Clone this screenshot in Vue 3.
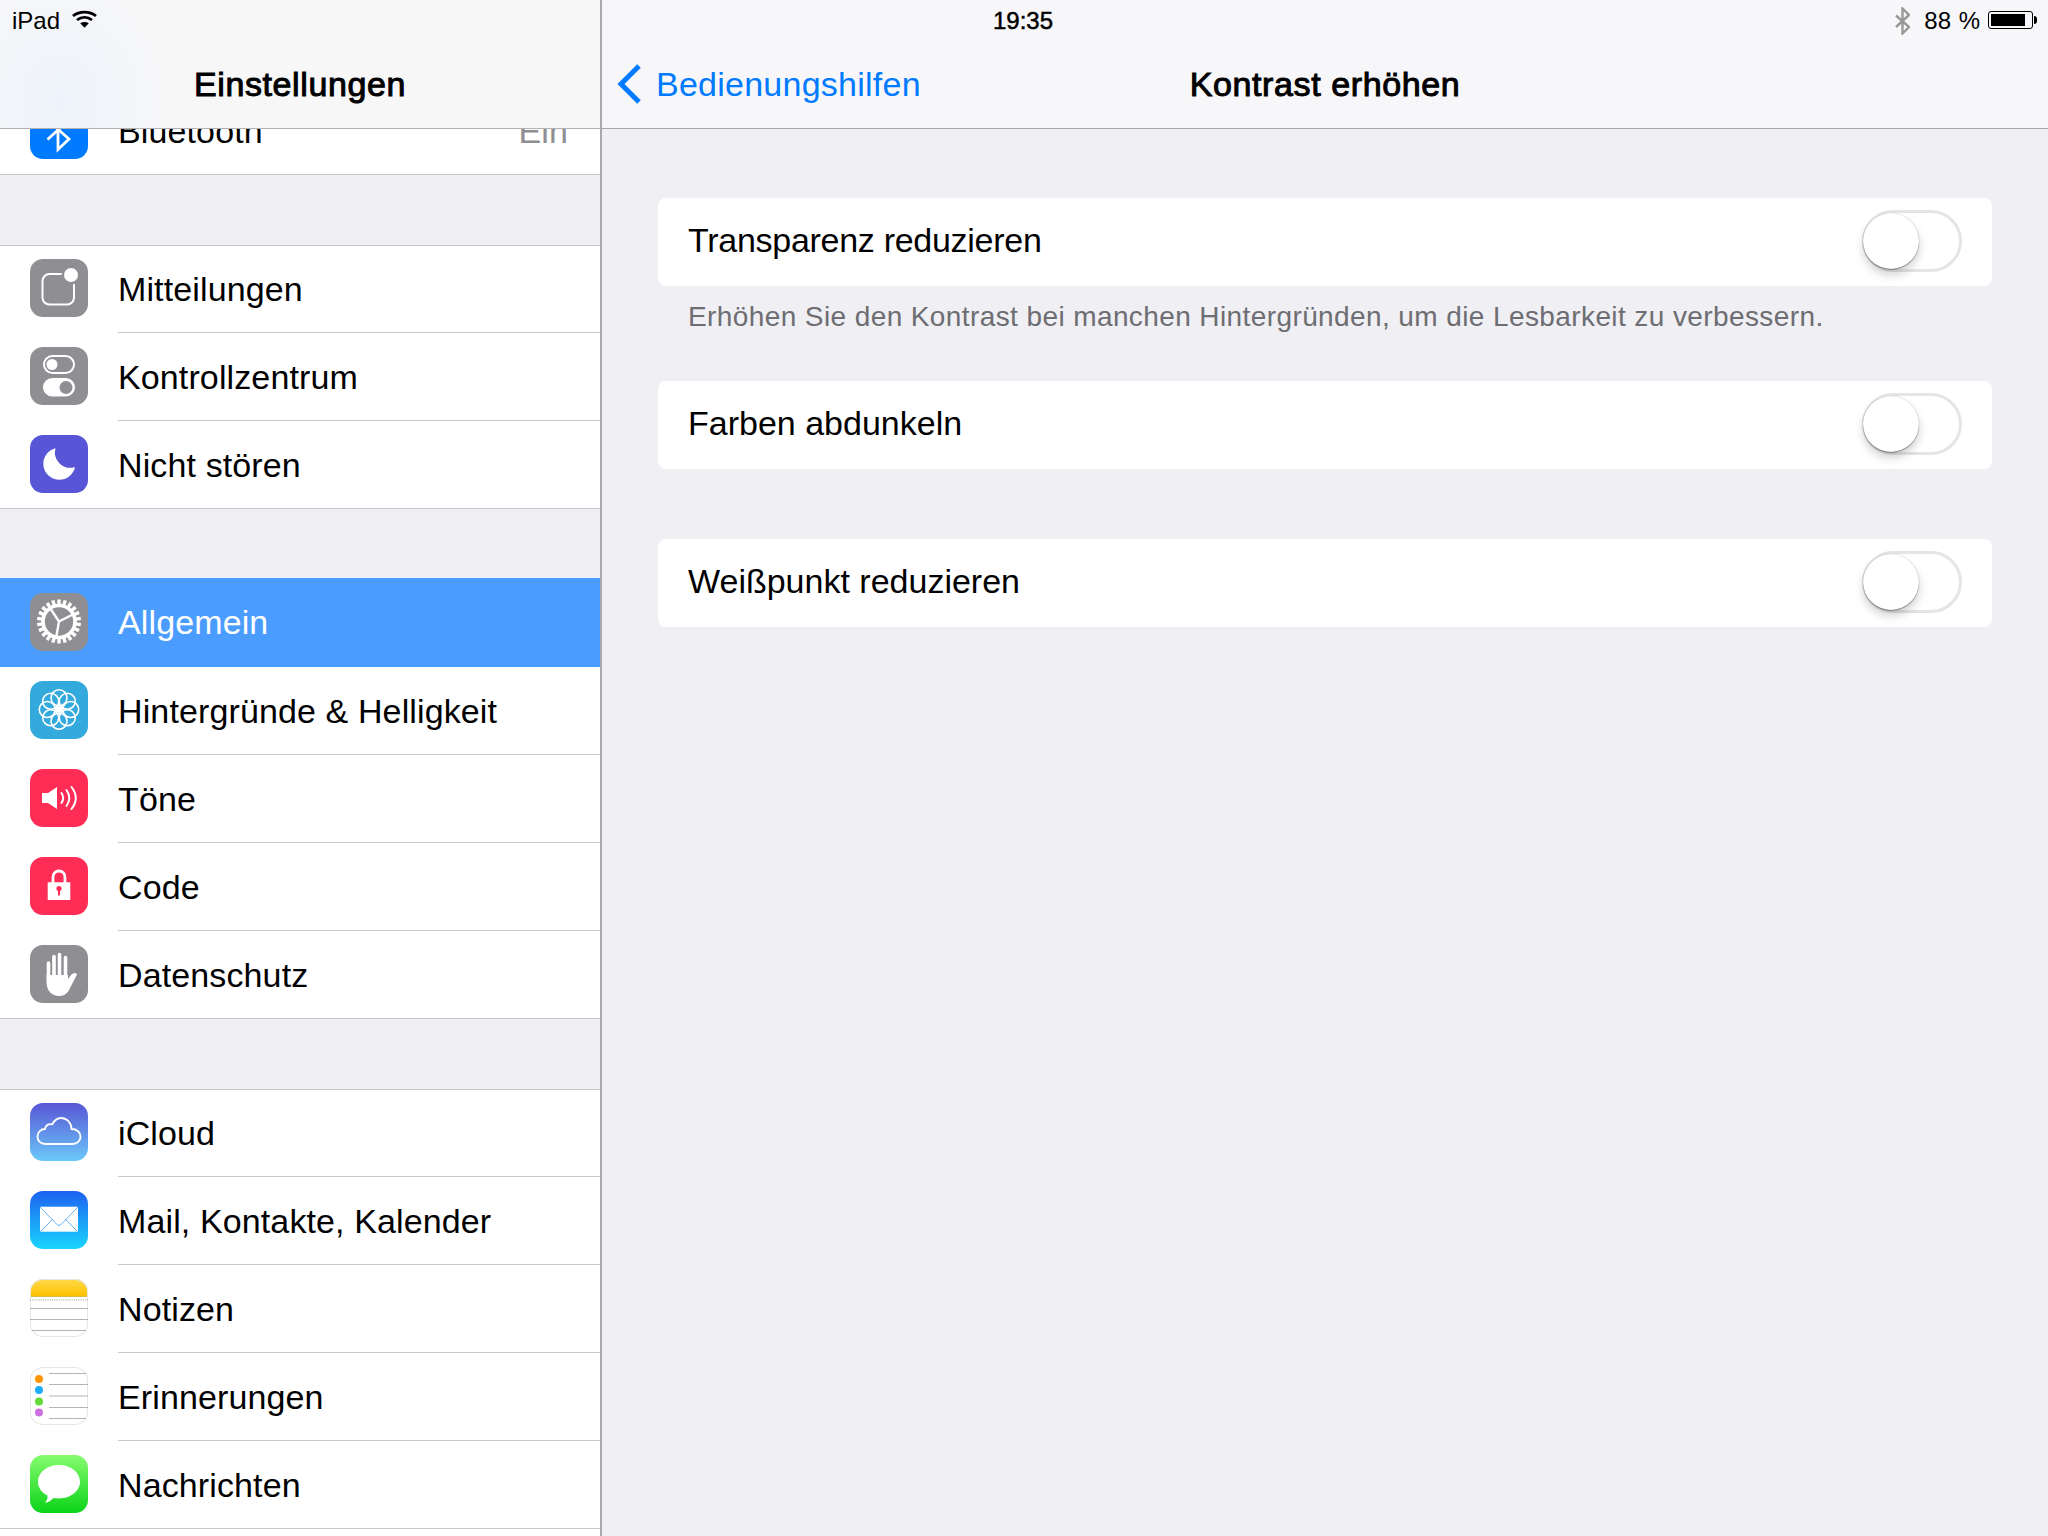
<script setup>
const groups = [
  [{ key: 'bluetooth', label: 'Bluetooth', value: 'Ein', cls: 'ic-blue' }],
  [
    { key: 'notify', label: 'Mitteilungen', cls: 'ic-gray' },
    { key: 'control', label: 'Kontrollzentrum', cls: 'ic-gray' },
    { key: 'moon', label: 'Nicht stören', cls: 'ic-indigo' }
  ],
  [
    { key: 'gear', label: 'Allgemein', cls: 'ic-gray', active: true },
    { key: 'flower', label: 'Hintergründe & Helligkeit', cls: 'ic-teal' },
    { key: 'sound', label: 'Töne', cls: 'ic-red' },
    { key: 'lock', label: 'Code', cls: 'ic-red' },
    { key: 'hand', label: 'Datenschutz', cls: 'ic-gray' }
  ],
  [
    { key: 'cloud', label: 'iCloud', cls: 'ic-cloud' },
    { key: 'mail', label: 'Mail, Kontakte, Kalender', cls: 'ic-mail' },
    { key: 'notes', label: 'Notizen', cls: 'ic-notes' },
    { key: 'reminders', label: 'Erinnerungen', cls: 'ic-white' },
    { key: 'messages', label: 'Nachrichten', cls: 'ic-green' }
  ]
]

const gearTeeth = Array.from({ length: 22 }, (_, i) => (i * 360) / 22)
const petals = Array.from({ length: 8 }, (_, i) => i * 45)
const reminderDots = [
  { y: 12, color: '#ff9500' },
  { y: 23, color: '#1badf8' },
  { y: 34.5, color: '#63da38' },
  { y: 45.5, color: '#cc73e1' }
]
</script>

<template>
  <div class="ipad">
    <aside class="sidebar">
      <header class="side-head">
        <div class="status">
          <span>iPad</span>
          <svg class="wifi" width="25" height="18" viewBox="0 0 25 18">
            <path d="M1 6C7.5 0.8 17.5 0.8 24 6" fill="none" stroke="#000" stroke-width="2.8" />
            <path d="M5 10C9.5 6.6 15.5 6.6 20 10" fill="none" stroke="#000" stroke-width="2.8" />
            <path d="M8.2 13.2C10.8 11.6 14.2 11.6 16.8 13.2L12.5 17.8Z" fill="#000" />
          </svg>
        </div>
        <h1 class="side-title">Einstellungen</h1>
      </header>

      <div class="side-list">
        <section v-for="(group, g) in groups" :key="g" class="group">
          <div v-for="row in group" :key="row.key" class="row" :class="{ active: row.active }">
            <div class="icon" :class="row.cls">
              <svg width="58" height="58" viewBox="0 0 58 58" fill="none">
                <template v-if="row.key === 'bluetooth'">
                  <path d="M17.5 19L39 38L28 48.5V8L39 19L17.5 38.5" stroke="#fff" stroke-width="2.8" />
                </template>
                <template v-else-if="row.key === 'notify'">
                  <rect x="12.5" y="15" width="31.5" height="30.5" rx="7" stroke="#fff" stroke-width="2" />
                  <circle cx="41" cy="16" r="9.5" fill="#8e8e93" />
                  <circle cx="41" cy="16" r="7" fill="#fff" />
                </template>
                <template v-else-if="row.key === 'control'">
                  <rect x="14" y="9" width="30" height="17" rx="8.5" stroke="#fff" stroke-width="2" />
                  <circle cx="22" cy="17.5" r="5.5" fill="#fff" />
                  <rect x="13" y="31" width="32" height="18.5" rx="9.25" fill="#fff" />
                  <circle cx="36" cy="40.5" r="6.5" fill="#8e8e93" />
                </template>
                <template v-else-if="row.key === 'moon'">
                  <path d="M25.5 13.2A16 16 0 1 0 45 32A15.4 15.4 0 0 1 25.5 13.2Z" fill="#fff" />
                </template>
                <template v-else-if="row.key === 'gear'">
                  <circle cx="29" cy="28.5" r="16" stroke="#fff" stroke-width="3.6" />
                  <rect v-for="a in gearTeeth" :key="a" x="27.3" y="6.5" width="3.4" height="7" fill="#fff" :transform="`rotate(${a} 29 28.5)`" />
                  <path d="M29 28.5L20.1 15.2M29 28.5L43.3 21.2M29 28.5L26.2 44.3" stroke="#fff" stroke-width="2.4" />
                </template>
                <template v-else-if="row.key === 'flower'">
                  <circle v-for="a in petals" :key="a" cx="29" cy="16.8" r="8" stroke="#fff" stroke-width="1.6" :transform="`rotate(${a} 29 28.5)`" />
                  <circle cx="29" cy="28.5" r="3.2" fill="#fff" />
                </template>
                <template v-else-if="row.key === 'sound'">
                  <path d="M12 24H18L27 18V40L18 34H12Z" fill="#fff" />
                  <path d="M31.5 24C33.5 27 33.5 31 31.5 34M36.5 21C40 26 40 32 36.5 37M41.5 18C47 25 47 33 41.5 40" stroke="#fff" stroke-width="2" stroke-linecap="round" />
                </template>
                <template v-else-if="row.key === 'lock'">
                  <path d="M23 26V20.5C23 16.5 25.5 14 29 14S35 16.5 35 20.5V26" stroke="#fff" stroke-width="2.8" />
                  <rect x="17.7" y="25.3" width="22.6" height="17.7" fill="#fff" />
                  <circle cx="29" cy="31.5" r="2.6" fill="#ff2d55" />
                  <rect x="28" y="32" width="2" height="6.5" fill="#ff2d55" />
                </template>
                <template v-else-if="row.key === 'hand'">
                  <path d="M16.5 30V38C17 46 22 51 29 51C35 51 38 47.5 40 43L47 29.5C46 27.5 43.5 27.5 41.5 29.5L38 34V30H16.5Z" fill="#fff" />
                  <path d="M18.5 32V18M24 32V11.5M29.5 32V9.5M35.5 33V12.5" stroke="#fff" stroke-width="3.6" stroke-linecap="round" />
                </template>
                <template v-else-if="row.key === 'cloud'">
                  <path d="M15 41C10 41 7.5 37 7.5 33.5C7.5 29 11 26 15 26C15.5 22 19 20.5 22 21.5C24.5 17 28 15 31 15C37 15 41.5 20 41.5 26C47 26 50.5 29.5 50.5 33.5C50.5 38 47 41 43 41Z" stroke="#fff" stroke-width="1.8" />
                </template>
                <template v-else-if="row.key === 'mail'">
                  <rect x="10" y="15.7" width="38" height="25" fill="#fff" />
                  <path d="M10 16L27 33.5Q29 35.5 31 33.5L48 16M10.5 40.5L22.5 28.5M47.5 40.5L35.5 28.5" stroke="#3d9bf3" stroke-width="0.8" />
                </template>
                <template v-else-if="row.key === 'notes'">
                  <path d="M0 21H58" stroke="#999" stroke-width="1" stroke-dasharray="1 1.2" />
                  <path d="M0 29.5H58M0 40.5H58M0 51.5H58" stroke="#b4b4b4" stroke-width="1" />
                </template>
                <template v-else-if="row.key === 'reminders'">
                  <path d="M19 6.5H58M19 17.5H58M19 29H58M19 40.5H58M19 51.5H58" stroke="#b4b4b4" stroke-width="1" />
                  <circle v-for="d in reminderDots" :key="d.y" cx="9" :cy="d.y" r="4" :fill="d.color" />
                </template>
                <template v-else-if="row.key === 'messages'">
                  <path d="M29 10C40.5 10 50 17.5 50 26.7C50 36 40.5 43.4 29 43.4C27 43.4 25.5 43.2 23.5 43C21 45.5 18.5 47.4 15 47.7C17 45.5 17.7 43.5 17.5 40.5C11.5 37.5 8 32.5 8 26.7C8 17.5 17.5 10 29 10Z" fill="#fff" />
                </template>
              </svg>
            </div>
            <div class="row-body">
              <span class="row-label">{{ row.label }}</span>
              <span v-if="row.value" class="row-value">{{ row.value }}</span>
            </div>
          </div>
        </section>
        <div class="row-tail"></div>
      </div>
    </aside>

    <main class="detail">
      <header class="detail-head">
        <div class="status status-detail">
          <span class="clock">19:35</span>
          <div class="status-right">
            <svg width="15" height="28" viewBox="0 0 15 28" fill="none">
              <path d="M1 8.5L14 20L7.5 26.5V1.5L14 8L1 20" stroke="#999" stroke-width="2.4" />
            </svg>
            <span class="pct">88 %</span>
            <div class="battery"><div class="battery-fill"></div></div>
          </div>
        </div>
        <div class="nav">
          <div class="back">
            <svg width="26" height="42" viewBox="0 0 26 42" fill="none">
              <path d="M23 3L5 21L23 39" stroke="#007aff" stroke-width="5" />
            </svg>
            <span>Bedienungshilfen</span>
          </div>
          <h2 class="detail-title">Kontrast erhöhen</h2>
        </div>
      </header>

      <div class="detail-body">
        <div class="card">
          <span class="tight">Transparenz reduzieren</span>
          <div class="switch"><div class="knob"></div></div>
        </div>
        <p class="note">Erhöhen Sie den Kontrast bei manchen Hintergründen, um die Lesbarkeit zu verbessern.</p>
        <div class="card">
          <span>Farben abdunkeln</span>
          <div class="switch"><div class="knob"></div></div>
        </div>
        <div class="card card-gap">
          <span>Weißpunkt reduzieren</span>
          <div class="switch"><div class="knob"></div></div>
        </div>
      </div>
    </main>
  </div>
</template>

<style>
html, body {
  margin: 0;
  background: #efeff4;
}
</style>

<style scoped>
.ipad {
  display: flex;
  width: 2048px;
  height: 1536px;
  overflow: hidden;
  background: #efeff4;
  color: #000;
  font-family: "Liberation Sans", Arial, sans-serif;
}

.sidebar {
  position: relative;
  flex: none;
  width: 600px;
  height: 1536px;
  overflow: hidden;
  border-right: 2px solid #a9a9ad;
}

.side-head {
  position: absolute;
  top: 0;
  left: 0;
  right: 0;
  z-index: 2;
  height: 128px;
  border-bottom: 1px solid #b2b2b2;
  background: radial-gradient(ellipse 110px 130px at 60px 100px, #eef3fb, rgba(238, 243, 251, 0) 100%), #f7f7f8;
}

.status {
  display: flex;
  align-items: center;
  gap: 12px;
  height: 42px;
  padding-left: 12px;
  font-size: 24px;
}

.wifi {
  margin-top: -4px;
}

.side-title,
.detail-title {
  margin: 0;
  font-size: 34px;
  font-weight: 400;
  line-height: 84px;
  text-align: center;
  -webkit-text-stroke: 1px #000;
  letter-spacing: 0.6px;
}

.side-list {
  padding-top: 88px;
}

.group {
  background: #fff;
  margin-bottom: 70px;
}

.group:last-of-type {
  margin-bottom: 0;
}

.group + .group {
  border-top: 1px solid #c8c7cc;
}

.group:has(.active) {
  border-top: 0;
  margin-top: -1px;
}

.row {
  display: flex;
  height: 88px;
  padding-left: 30px;
}

.row:first-child {
  height: 87px;
}

.row.active {
  height: 89px;
  background: #4a9dff;
  color: #fff;
}

.icon {
  flex: none;
  width: 58px;
  height: 58px;
  margin-top: 14px;
  border-radius: 13px;
  overflow: hidden;
}

.row:first-child .icon {
  margin-top: 13px;
}

.row.active .icon {
  margin-top: 15px;
}

.icon svg {
  display: block;
}

.ic-blue { background: #007aff; }
.ic-gray { background: #8e8e93; }
.ic-indigo { background: #5856d6; }
.ic-teal { background: #34aadc; }
.ic-red { background: #ff2d55; }
.ic-cloud { background: linear-gradient(#5856d6, #6cc8f9); }
.ic-mail { background: linear-gradient(#1d62f0, #19d5fd); }
.ic-green { background: linear-gradient(#87fc70, #0bd318); }
.ic-notes {
  background: linear-gradient(#ffdb4c, #fdc000 17px, #d9b93f 17.5px, #fff 18px);
  box-shadow: inset 0 0 0 1px #e6e6e6;
}
.ic-white {
  background: #fff;
  box-shadow: inset 0 0 0 1px #e6e6e6;
}

.row-body {
  flex: 1;
  display: flex;
  align-items: center;
  justify-content: space-between;
  margin-left: 30px;
  padding-top: 2px;
  padding-right: 32px;
  border-bottom: 1px solid #c8c7cc;
  font-size: 34px;
  letter-spacing: 0.12px;
}

.row:first-child .row-body {
  padding-top: 0;
}

.row.active .row-body {
  border-bottom: 0;
}

.group .row:last-child {
  position: relative;
}

.group .row:last-child::after {
  content: "";
  position: absolute;
  left: 0;
  right: 0;
  bottom: 0;
  height: 1px;
  background: #c8c7cc;
}

.row-value {
  color: #8e8e93;
}

.row-tail {
  height: 10px;
  background: #fff;
}

.detail {
  flex: 1;
  min-width: 0;
}

.detail-head {
  height: 128px;
  border-bottom: 1px solid #a7a7aa;
  background: #f7f7f9;
}

.status-detail {
  position: relative;
  justify-content: flex-end;
  padding: 0 15px 0 0;
}

.clock {
  position: absolute;
  left: 0;
  right: 604px;
  text-align: center;
  -webkit-text-stroke: 0.5px #000;
}

.status-right {
  display: flex;
  align-items: center;
  gap: 14px;
}

.pct {
  word-spacing: 1px;
}

.battery {
  position: relative;
  width: 45px;
  height: 18px;
  margin-top: -2px;
  margin-left: -6px;
  padding: 2px;
  box-sizing: border-box;
  border: 1px solid #000;
  border-radius: 3px;
}

.battery::after {
  content: "";
  position: absolute;
  top: 4px;
  right: -5px;
  width: 3px;
  height: 8px;
  border-radius: 0 3px 3px 0;
  background: #000;
}

.battery-fill {
  width: 88%;
  height: 100%;
  background: #000;
}

.nav {
  position: relative;
  height: 86px;
}

.back {
  position: absolute;
  top: 0;
  left: 14px;
  display: flex;
  align-items: center;
  gap: 14px;
  height: 84px;
  font-size: 34px;
  letter-spacing: 0.25px;
  color: #007aff;
}

.detail-body {
  padding: 69px 56px 0;
}

.card {
  display: flex;
  align-items: center;
  justify-content: space-between;
  height: 88px;
  padding: 0 30px 3px;
  box-sizing: border-box;
  border-radius: 8px;
  background: #fff;
  font-size: 34px;
}

.tight {
  letter-spacing: -0.28px;
}

.card-gap {
  margin-top: 70px;
}

.note {
  height: 95px;
  margin: 0;
  padding: 16px 30px 0;
  box-sizing: border-box;
  font-size: 28px;
  letter-spacing: 0.4px;
  line-height: 30px;
  color: #6d6d72;
}

.switch {
  position: relative;
  width: 100px;
  height: 62px;
  box-sizing: border-box;
  border: 3px solid #e5e5e5;
  border-radius: 31px;
  background: #fff;
}

.knob {
  position: absolute;
  top: 0;
  left: -2px;
  width: 56px;
  height: 56px;
  border-radius: 50%;
  background: #fff;
  box-shadow: 0 1px 1px rgba(0, 0, 0, 0.35), 0 0 1px rgba(0, 0, 0, 0.3), 0 6px 10px rgba(0, 0, 0, 0.18);
}
</style>
